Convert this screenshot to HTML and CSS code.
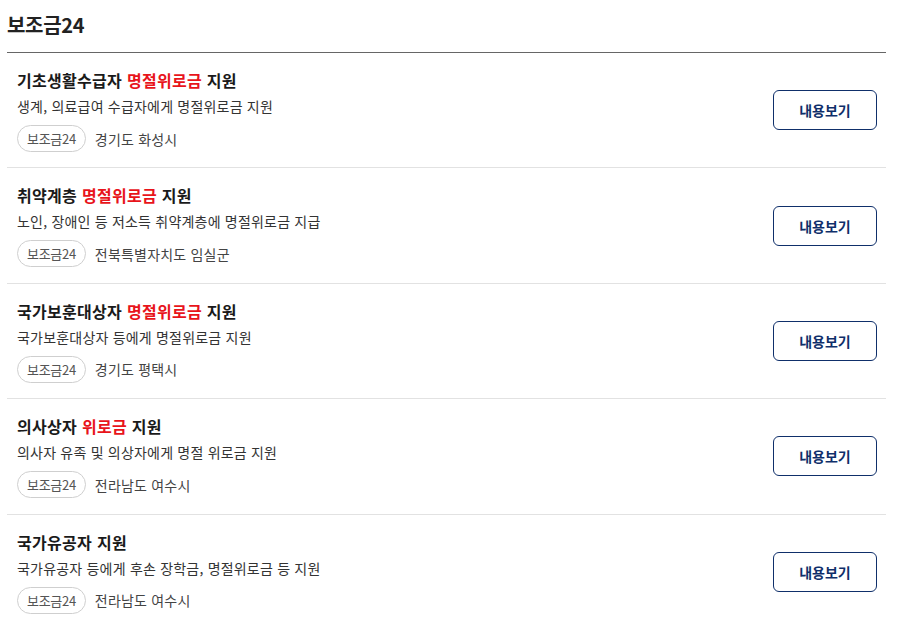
FILE: index.html
```html
<!DOCTYPE html>
<html lang="ko">
<head>
<meta charset="utf-8">
<link rel="stylesheet" href="styles.css">
</head>
<body>
<div class="wrap">
  <h2 class="heading">보조금24</h2>
  <ul class="list">
    <li class="item">
      <div class="info">
        <p class="title">기초생활수급자 <em>명절위로금</em> 지원</p>
        <p class="desc">생계, 의료급여 수급자에게 명절위로금 지원</p>
        <div class="meta"><span class="tag">보조금24</span><span class="region">경기도 화성시</span></div>
      </div>
      <button class="btn">내용보기</button>
    </li>
    <li class="item">
      <div class="info">
        <p class="title">취약계층 <em>명절위로금</em> 지원</p>
        <p class="desc">노인, 장애인 등 저소득 취약계층에 명절위로금 지급</p>
        <div class="meta"><span class="tag">보조금24</span><span class="region">전북특별자치도 임실군</span></div>
      </div>
      <button class="btn">내용보기</button>
    </li>
    <li class="item">
      <div class="info">
        <p class="title">국가보훈대상자 <em>명절위로금</em> 지원</p>
        <p class="desc">국가보훈대상자 등에게 명절위로금 지원</p>
        <div class="meta"><span class="tag">보조금24</span><span class="region">경기도 평택시</span></div>
      </div>
      <button class="btn">내용보기</button>
    </li>
    <li class="item">
      <div class="info">
        <p class="title">의사상자 <em>위로금</em> 지원</p>
        <p class="desc">의사자 유족 및 의상자에게 명절 위로금 지원</p>
        <div class="meta"><span class="tag">보조금24</span><span class="region">전라남도 여수시</span></div>
      </div>
      <button class="btn">내용보기</button>
    </li>
    <li class="item">
      <div class="info">
        <p class="title">국가유공자 지원</p>
        <p class="desc">국가유공자 등에게 후손 장학금, 명절위로금 등 지원</p>
        <div class="meta"><span class="tag">보조금24</span><span class="region">전라남도 여수시</span></div>
      </div>
      <button class="btn">내용보기</button>
    </li>
  </ul>
</div>
</body>
</html>
```
FILE: styles.css
```css
* { box-sizing: border-box; }
html, body { margin: 0; padding: 0; background: #fff; }
body {
  font-family: "Noto Sans CJK KR", "Noto Sans", sans-serif;
  color: #222;
}
.wrap {
  width: 879px;
  margin-left: 7px;
}
.heading {
  margin: 0;
  padding-top: 11px;
  height: 53px;
  font-size: 20px;
  line-height: 28px;
  font-weight: 700;
  color: #222;
  letter-spacing: -0.3px;
  border-bottom: 1px solid #666;
}
.list {
  list-style: none;
  margin: 0;
  padding: 0;
}
.item {
  display: flex;
  align-items: flex-start;
  justify-content: space-between;
  height: 115.4px;
  padding: 16px 9px 0 10px;
  border-bottom: 1px solid #e2e2e2;
}
.item:last-child { border-bottom: none; }
.info {
  display: flex;
  flex-direction: column;
}
.title {
  margin: 0;
  font-size: 16px;
  line-height: 22px;
  font-weight: 700;
  color: #1a1a1a;
  letter-spacing: 0.3px;
}
.title em {
  font-style: normal;
  color: #e8141b;
}
.desc {
  margin: 5px 0 0;
  font-size: 14px;
  line-height: 20px;
  color: #333;
  letter-spacing: 0.2px;
}
.meta {
  display: flex;
  align-items: center;
  gap: 9px;
  margin-top: 9px;
}
.tag {
  display: inline-flex;
  align-items: center;
  justify-content: center;
  height: 27px;
  padding: 0 9px;
  border: 1px solid #cfcfcf;
  border-radius: 14px;
  font-size: 13px;
  color: #555;
  letter-spacing: -0.3px;
}
.region {
  font-size: 14px;
  color: #444;
  letter-spacing: 0.2px;
}
.btn {
  align-self: center;
  margin-top: -16px;
  width: 104px;
  height: 40px;
  border: 1px solid #0f2f6a;
  border-radius: 6px;
  background: #fff;
  color: #0f2f6a;
  font-family: inherit;
  font-size: 14px;
  font-weight: 700;
  cursor: pointer;
}
```
